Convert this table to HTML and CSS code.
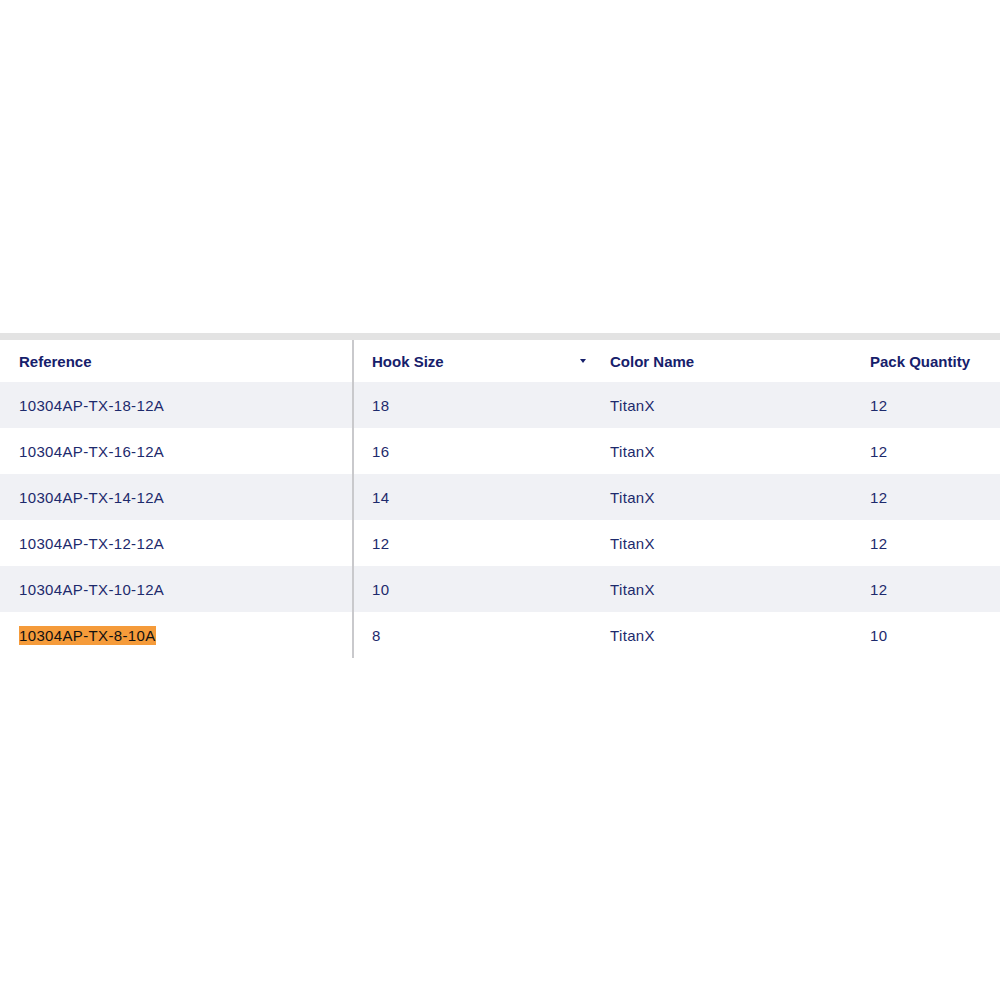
FILE: index.html
```html
<!DOCTYPE html>
<html>
<head>
<meta charset="utf-8">
<link rel="stylesheet" href="styles.css">
</head>
<body>
<div class="page">
  <div class="table">
    <div class="row head">
      <div class="cell c1">Reference</div>
      <div class="cell c2">Hook Size<span class="sort"></span></div>
      <div class="cell c3">Color Name</div>
      <div class="cell c4">Pack Quantity</div>
    </div>
    <div class="row alt">
      <div class="cell c1">10304AP-TX-18-12A</div>
      <div class="cell c2">18</div>
      <div class="cell c3">TitanX</div>
      <div class="cell c4">12</div>
    </div>
    <div class="row">
      <div class="cell c1">10304AP-TX-16-12A</div>
      <div class="cell c2">16</div>
      <div class="cell c3">TitanX</div>
      <div class="cell c4">12</div>
    </div>
    <div class="row alt">
      <div class="cell c1">10304AP-TX-14-12A</div>
      <div class="cell c2">14</div>
      <div class="cell c3">TitanX</div>
      <div class="cell c4">12</div>
    </div>
    <div class="row">
      <div class="cell c1">10304AP-TX-12-12A</div>
      <div class="cell c2">12</div>
      <div class="cell c3">TitanX</div>
      <div class="cell c4">12</div>
    </div>
    <div class="row alt">
      <div class="cell c1">10304AP-TX-10-12A</div>
      <div class="cell c2">10</div>
      <div class="cell c3">TitanX</div>
      <div class="cell c4">12</div>
    </div>
    <div class="row">
      <div class="cell c1"><span class="mark">10304AP-TX-8-10A</span></div>
      <div class="cell c2">8</div>
      <div class="cell c3">TitanX</div>
      <div class="cell c4">10</div>
    </div>
  </div>
</div>
</body>
</html>
```

FILE: styles.css
```css
html, body {
  margin: 0;
  padding: 0;
  background: #ffffff;
}

body {
  font-family: "Liberation Sans", Arial, sans-serif;
  font-size: 15px;
  color: #1d2a6c;
}

.page {
  padding-top: 333px;
}

.table {
  border-top: 7px solid #e3e3e3;
  box-shadow: 0 5px 4px -2px rgba(0, 0, 0, 0.12);
}

.row {
  display: grid;
  grid-template-columns: 354px 238px 260px 1fr;
  height: 46px;
  align-items: stretch;
  letter-spacing: 0.35px;
}

.row.head {
  height: 42px;
  font-weight: bold;
  color: #16206b;
  letter-spacing: 0;
}

.row.alt {
  background: #f0f1f5;
}

.cell {
  display: flex;
  align-items: center;
  padding-left: 18px;
  white-space: nowrap;
}

.cell.c1 {
  padding-left: 19px;
  border-right: 2px solid #c9c9cc;
  box-sizing: border-box;
}

.cell.c2 {
  justify-content: space-between;
  padding-right: 6px;
}

.sort {
  width: 0;
  height: 0;
  border-left: 3px solid transparent;
  border-right: 3px solid transparent;
  border-top: 4px solid #16206b;
  margin-bottom: 1px;
}

.mark {
  background: #f59b3a;
  color: #111111;
  padding: 1px 0;
}
```
